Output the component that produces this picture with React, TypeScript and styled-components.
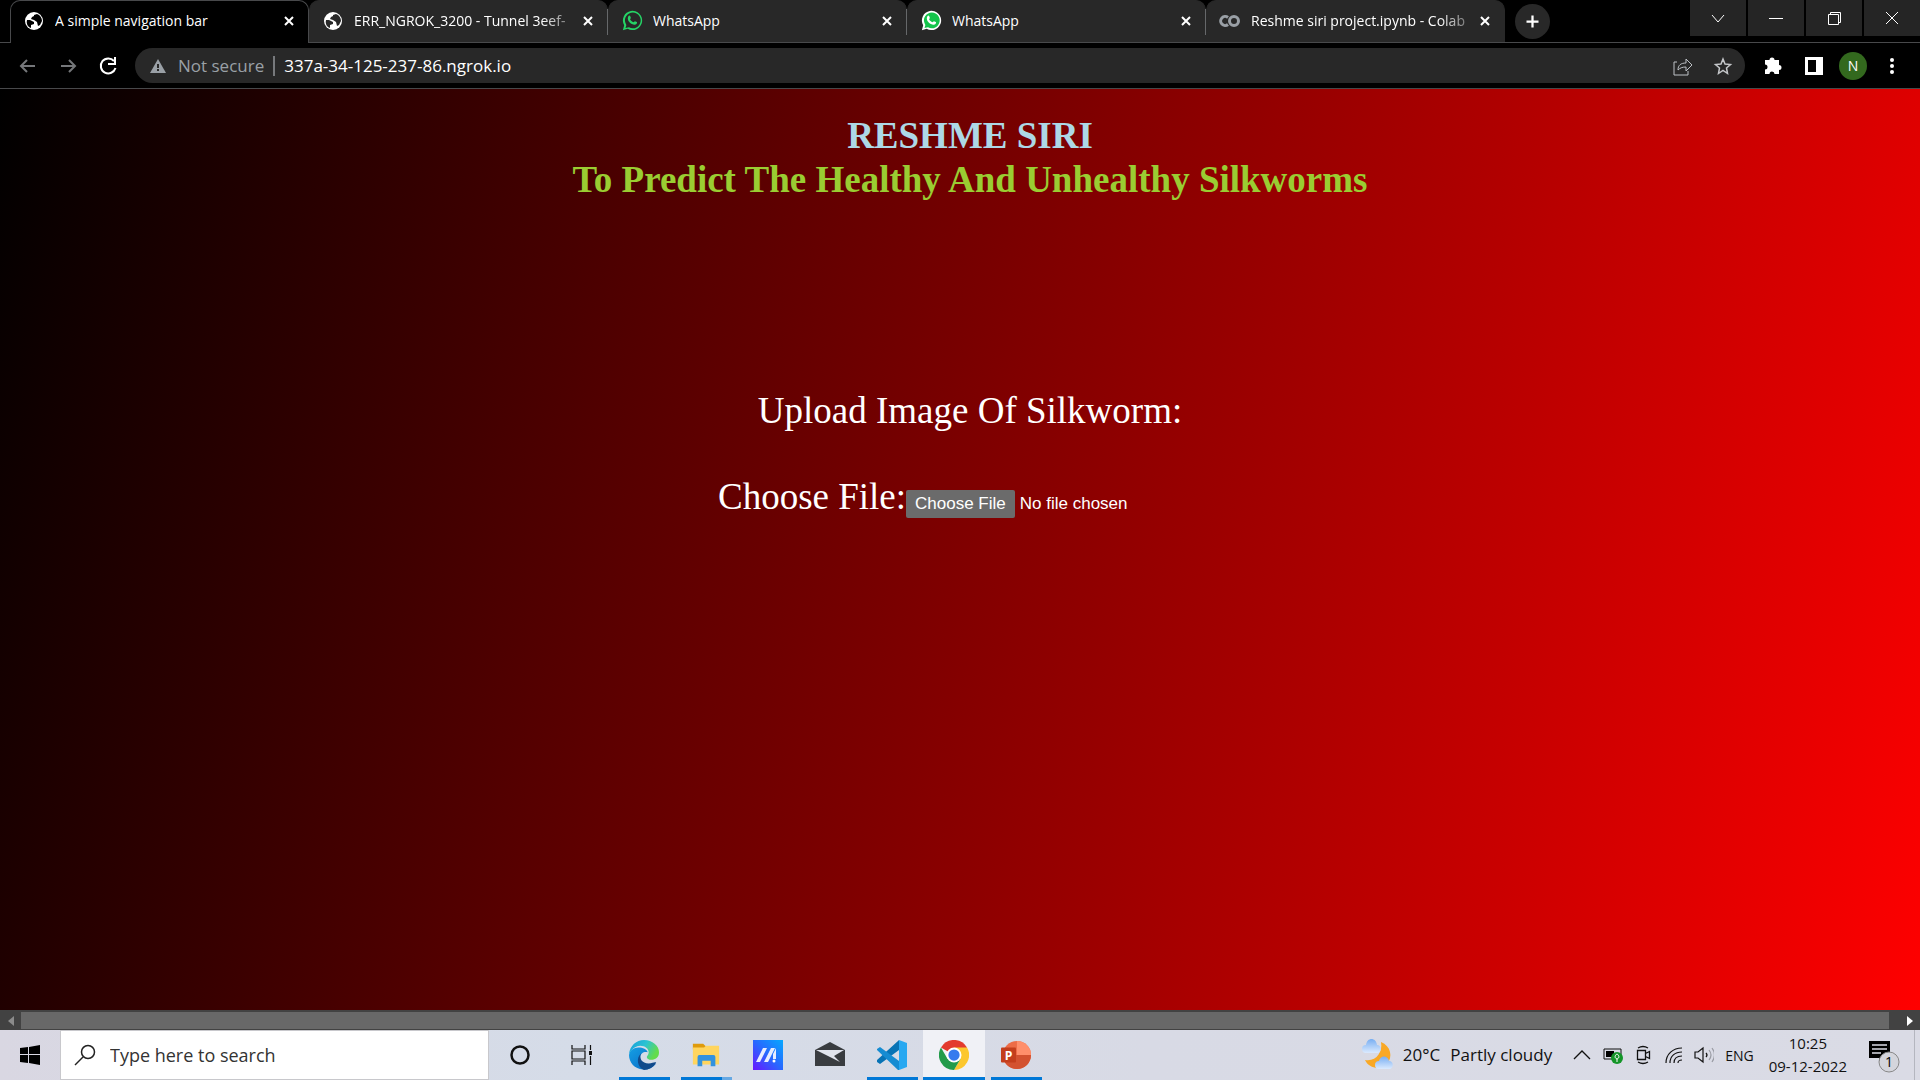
import React from "react";
import styled, { createGlobalStyle } from "styled-components";

const Global = createGlobalStyle`
  *, *::before, *::after { box-sizing: border-box; }
  body { margin: 0; background: #000; font-family: "Open Sans", "Noto Sans", sans-serif; }
  button { border: 0; padding: 0; background: none; color: inherit; font: inherit; }
`;

const Window = styled.div`
  display: flex;
  flex-direction: column;
  min-height: 100vh;
  overflow: hidden;
`;

const TabStrip = styled.header`
  display: flex;
  height: 43px;
  padding-left: 10px;
  border-bottom: 1px solid #48494b;
  color: #fff;
`;

const Tabs = styled.div`
  display: flex;
  flex: 0 1 1495px;
  min-width: 0;
`;

const Tab = styled.div<{ $active?: boolean; $divider?: boolean }>`
  position: relative;
  display: flex;
  align-items: center;
  flex: 1 1 0;
  min-width: 0;
  height: ${(p) => (p.$active ? 43 : 42)}px;
  padding: 0 13px 2px 12px;
  gap: 10px;
  border-radius: 10px 10px 0 0;
  border: 1px solid ${(p) => (p.$active ? "#48494b" : "#282828")};
  border-bottom: 0;
  background: ${(p) => (p.$active ? "#000" : "#282828")};

  ${(p) =>
    p.$divider &&
    `&::before { content: ""; position: absolute; left: -2px; top: 8px; width: 1px; height: 26px; background: #66686a; }`}
`;

const TabTitle = styled.span<{ $long?: boolean }>`
  flex: 1;
  min-width: 0;
  overflow: hidden;
  white-space: nowrap;
  font-size: 14px;
  line-height: 20px;
  ${(p) => p.$long && "mask-image: linear-gradient(to right, #000 86%, rgba(0, 0, 0, 0.3));"}
`;

const IconSlot = styled.span`
  display: grid;
  place-items: center;
  flex: none;
  width: 22px;
`;

const IconButton = styled.button<{ $size: number }>`
  display: grid;
  place-items: center;
  flex: none;
  width: ${(p) => p.$size}px;
  height: ${(p) => p.$size}px;
  svg { display: block; }
`;

const NewTab = styled(IconButton)`
  align-self: center;
  margin: 0 auto 0 10px;
  border-radius: 50%;
  background: #282828;
`;

const WindowControls = styled.div`
  display: flex;
  gap: 2px;
  height: 36px;
`;

const WindowButton = styled.button`
  display: grid;
  place-items: center;
  width: 56px;
  background: #252525;
`;

const Toolbar = styled.nav`
  display: flex;
  align-items: center;
  height: 46px;
  padding: 0 12px;
  border-bottom: 1px solid #48494b;
  color: #fff;
`;

const NavButtons = styled.div`
  display: flex;
  gap: 8px;
  margin-right: 11px;
`;

const AddressBar = styled.div`
  display: flex;
  align-items: center;
  flex: 1;
  height: 35px;
  padding: 0 6px 0 15px;
  border-radius: 18px;
  background: #282828;
`;

const Security = styled.span`
  padding: 0 9px 0 12px;
  border-right: 2px solid #77797c;
  color: #9aa0a6;
  font-size: 17px;
  line-height: 20px;
`;

const Address = styled.input`
  flex: 1;
  min-width: 0;
  padding: 0 0 0 9px;
  border: 0;
  outline: 0;
  background: none;
  color: #fff;
  font: 17px/24px "Open Sans", "Noto Sans", sans-serif;
`;

const ToolbarActions = styled.div`
  display: flex;
  align-items: center;
  gap: 9px;
  margin-left: 12px;
`;

const Avatar = styled.button`
  width: 28px;
  height: 28px;
  border-radius: 50%;
  background: #33691e;
  font-size: 14px;
`;

const Page = styled.main`
  flex: 1;
  padding: 25px 0 0 20px;
  background: linear-gradient(107deg, #000, #f00);
  font: 37px/44px "Liberation Serif", serif;
  text-align: center;
  color: #fff;
`;

const Heading = styled.h1<{ $color: string }>`
  margin: 0;
  font: bold 37px/44px "Liberation Serif", serif;
  color: ${(p) => p.$color};
`;

const UploadForm = styled.form`
  margin-top: 187px;
`;

const FormTitle = styled.p`
  margin: 0 0 42px;
`;

const FileRow = styled.div`
  display: flex;
  align-items: baseline;
  justify-content: center;
`;

const FileInput = styled.input`
  width: 316px;
  color: #fff;
  font: 17px/20px "Liberation Sans", Arial, sans-serif;

  &::file-selector-button {
    height: 28px;
    margin-right: 5px;
    padding: 1px 9px;
    border: 0;
    border-radius: 2px;
    background: #6b6b6b;
    color: #fff;
    font: inherit;
  }
`;

const ScrollBar = styled.div`
  display: flex;
  height: 20px;
  padding: 2px 0 1px;
  background: #424242;
`;

const ScrollThumb = styled.div`
  flex: 1;
  background: #686868;
`;

const ScrollButton = styled.button<{ $color: string }>`
  display: grid;
  place-items: center;
  width: 21px;
  color: ${(p) => p.$color};
`;

const ScrollEnd = styled.div`
  display: flex;
  justify-content: flex-end;
  width: 31px;
`;

const Taskbar = styled.footer`
  display: flex;
  height: 50px;
  background: linear-gradient(90deg, #d9d7e2, #d5dce8 30%, #d8dae5 60%, #dadbe5);
  color: #111;
`;

const StartButton = styled.button`
  display: grid;
  place-items: center;
  width: 60px;
`;

const SearchBox = styled.label`
  display: flex;
  align-items: center;
  width: 429px;
  border: 1px solid #c8c8cc;
  padding-left: 13px;
  gap: 14px;
  background: #fff;
`;

const SearchInput = styled.input`
  flex: 1;
  min-width: 0;
  padding: 0;
  border: 0;
  outline: 0;
  background: none;
  font: 18px/26px "Open Sans", "Noto Sans", sans-serif;
  &::placeholder { color: #333; opacity: 1; }
`;

const Apps = styled.div`
  display: flex;
  flex: 1;
`;

const AppButton = styled.button<{ $state?: "open" | "stacked" | "focused" }>`
  display: flex;
  flex-direction: column;
  align-items: center;
  width: 62px;
  padding-top: 10px;
  background: ${(p) => (p.$state === "focused" ? "#f0f1f6" : "none")};

  &::after {
    content: "";
    width: ${(p) => (p.$state === "focused" ? "100%" : "51px")};
    height: 3px;
    margin-top: auto;
    background: ${(p) =>
      !p.$state
        ? "none"
        : p.$state === "stacked"
          ? "linear-gradient(90deg, #0078d7 80%, #66a8e3 80%)"
          : "#0078d7"};
  }
`;

const Tray = styled.div`
  display: flex;
  align-items: center;
  padding-right: 5px;
`;

const Weather = styled.button`
  display: flex;
  align-items: center;
  gap: 10px;
  margin-right: 20px;
  font-size: 17px;
  line-height: 24px;
  white-space: nowrap;
`;

const TrayIcons = styled.div`
  display: flex;
  align-items: center;
  gap: 10px;
`;

const Language = styled.button`
  margin: 0 15px 0 11px;
  font-size: 14px;
`;

const Clock = styled.time`
  margin-right: 20px;
  font-size: 15px;
  line-height: 23px;
  text-align: center;
  white-space: nowrap;
`;

const Notifications = styled.button`
  padding: 5px 13px 0 0;
  border-right: 1px solid #b4b6bf;
  height: 50px;
`;

const Globe = ({ hole }: { hole: string }) => (
  <svg width="20" height="20" viewBox="0 0 20 20" aria-hidden="true">
    <circle cx="10" cy="10" r="9" fill="#fff" />
    <path d="M3 9h3l4 2v2l-3 1v3C4 16 2 13 3 9zm7-5 3-1c3 1 5 4 5 7l-2 4-2 1-1-4-3-2-3-1 1-2 2-1z" fill={hole} />
  </svg>
);

const WhatsApp = ({ filled }: { filled?: boolean }) => (
  <svg width="21" height="21" viewBox="0 0 24 24" aria-hidden="true">
    <path d="M1 23 2.500 17.500A11 11 0 1 1 6.500 21.500z" fill={filled ? "#fff" : "#25d366"} />
    <path d="M4 20.500 5 17a9 9 0 1 1 3 2.700z" fill={filled ? "#14c44b" : "#282828"} />
    <path d="M7.300 7c.7-1 1.700-.8 2-.1l.8 2c.1.600-.5 1.100-.9 1.600.8 1.600 2.200 2.800 4 3.600.5-.4 1-1.300 1.600-1.300l2.100 1c.6.300.3 1.500-.3 2.100-1.400 1.400-3.400 1-5.300 0-3-1.600-6-5-4-8.900z" fill={filled ? "#fff" : "#25d366"} />
  </svg>
);

const Colab = () => (
  <svg width="22" height="14" viewBox="0 0 22 14" fill="none" stroke="#9aa0a6" strokeWidth="3" aria-hidden="true">
    <path d="M9 3.500A4.500 4.500 0 1 0 9 10.500" />
    <circle cx="15" cy="7" r="4.500" />
  </svg>
);

const Cross = () => (
  <svg width="12" height="12" viewBox="0 0 12 12" stroke="#fff" strokeWidth="2" aria-hidden="true">
    <path d="m2 2 8 8m0-8-8 8" />
  </svg>
);

type LineProps = { d: string; size?: number; width?: number; color?: string; fill?: string };
const Line = ({ d, size = 20, width = 2, color = "currentColor", fill = "none" }: LineProps) => (
  <svg width={size} height={size} viewBox="0 0 20 20" fill={fill} stroke={color} strokeWidth={width} aria-hidden="true">
    <path d={d} />
  </svg>
);

const EdgeIcon = () => (
  <svg width="30" height="30" viewBox="0 0 32 32" aria-hidden="true">
    <defs>
      <linearGradient id="edgeTop" x2="1" y2=".4"><stop stopColor="#159bdc" /><stop offset=".55" stopColor="#2bc3d2" /><stop offset="1" stopColor="#63dc4b" /></linearGradient>
      <linearGradient id="edgeLeft" y2="1"><stop stopColor="#159fe4" /><stop offset="1" stopColor="#0868c4" /></linearGradient>
    </defs>
    <path d="M0 15C1 6 8 0 16 0c9 0 16 6 16 13 0 6-4 8-8 8-3 0-5-1-5-3 0-1 2-2 2-5 0-4-4-7-9-7-4 0-9 3-12 9z" fill="url(#edgeTop)" />
    <path d="M0 16c1-5 5-8 10-8 5 0 9 2 10 5-4-1-8 1-8 6 0 6 7 10 17 6-4 5-9 7-14 6.500C6 31 0 24 0 16z" fill="url(#edgeLeft)" />
    <path d="M13 14c-3 5 1 11 8 11 4 0 6-2 8-1-3 5-8 8-13 8-7-3-9-13-3-18z" fill="#114a8b" />
  </svg>
);

const FolderIcon = () => (
  <svg width="30" height="30" viewBox="0 0 32 32" aria-hidden="true">
    <path d="M2 4h11l3 3-3 3H2z" fill="#df9b0c" /><path d="M2 8h12l2-2h14v20H2z" fill="#ffd55e" />
    <path d="M7 28V18q0-2 2-2h15q2 0 2 2v10h-5v-6h-9v6z" fill="#3392de" />
  </svg>
);

const MyAsusIcon = () => (
  <svg width="30" height="30" viewBox="0 0 30 30" aria-hidden="true">
    <defs><linearGradient id="asus" x1="0" y1="1" x2="1" y2="0"><stop stopColor="#6a16ff" /><stop offset=".5" stopColor="#2868ff" /><stop offset="1" stopColor="#06a9ff" /></linearGradient></defs>
    <path fill="url(#asus)" d="M0 0h30v30H0z" /><path d="M3 22h4l7-14h-4zm8 0h4L22 8h-4zM20 14l3-6v11h-3z" fill="#e8edff" /><circle cx="21" cy="21" r="1.500" fill="#fff" />
  </svg>
);

const MailIcon = () => (
  <svg width="30" height="30" viewBox="0 0 30 30" aria-hidden="true">
    <path d="M0 10 15 2l15 8v16H0z" fill="#393c40" /><path d="M1 10h28l-10 6 6 6-12-6z" fill="#e1e4ed" />
  </svg>
);

const CodeIcon = () => (
  <svg width="30" height="30" viewBox="0 0 30 30" aria-hidden="true">
    <path d="M22 0v10L3 24l-3-2v-2L21 1z" fill="#0873b5" /><path d="m3 7 19 14v9h-1L0 10V9z" fill="#168cd2" /><path d="m22 0 8 3v24l-8 3z" fill="#28a8f1" />
  </svg>
);

const ChromeIcon = () => (
  <svg width="30" height="30" viewBox="0 0 32 32" aria-hidden="true">
    <path d="M2.100 8A16 16 0 0 1 29.900 8L16 16z" fill="#e33b2e" />
    <path d="M16 8h13.900A16 16 0 0 1 16 32l7-12z" fill="#fcc72e" />
    <path d="M16 32A16 16 0 0 1 2.100 8L9 20l14 0z" fill="#229b4a" />
    <circle cx="16" cy="16" r="8" fill="#fff" /><circle cx="16" cy="16" r="6" fill="#377bee" />
  </svg>
);

const PowerPointIcon = () => (
  <svg width="30" height="30" viewBox="0 0 32 32" aria-hidden="true">
    <circle cx="17" cy="16" r="15" fill="#ed6c47" /><path d="M17 1a15 15 0 0 1 15 15H17z" fill="#ff8f6b" /><path d="M2 16h30a15 15 0 0 1-30 0z" fill="#d35230" />
    <rect y="8" width="16" height="16" rx="1" fill="#c43e1c" /><text x="8" y="21" fill="#fff" textAnchor="middle" fontFamily="Open Sans" fontWeight="700" fontSize="13">P</text>
  </svg>
);

const WeatherIcon = () => (
  <svg width="32" height="34" viewBox="0 0 32 34" aria-hidden="true">
    <defs><linearGradient id="cloud" x2="0" y2="1"><stop stopColor="#78aef2" /><stop offset="1" stopColor="#dbeafe" /></linearGradient></defs>
    <path d="M20 4c10 4 12 15 6 22-6 6-18 5-22-4 11 2 18-8 16-18z" fill="#f9a825" />
    <path d="M5 15a4 4 0 0 1 0-8c1-8 10-8 11 0 5 0 5 8 0 8z" fill="url(#cloud)" /><path d="M18 31a4 4 0 0 1 0-8c1-6 9-6 10 0 5 0 5 8 0 8z" fill="url(#cloud)" />
  </svg>
);

const tabs = [
  { title: "A simple navigation bar", icon: <Globe hole="#000" /> },
  { title: "ERR_NGROK_3200 - Tunnel 3eef-", icon: <Globe hole="#282828" />, long: true },
  { title: "WhatsApp", icon: <WhatsApp /> },
  { title: "WhatsApp", icon: <WhatsApp filled /> },
  { title: "Reshme siri project.ipynb - Colab", icon: <Colab />, long: true },
];

export default function App() {
  return (
    <Window>
      <Global />
      <TabStrip>
        <Tabs>
          {tabs.map((tab, i) => (
            <Tab key={i} $active={i === 0} $divider={i > 1}>
              <IconSlot>{tab.icon}</IconSlot>
              <TabTitle $long={tab.long}>{tab.title}</TabTitle>
              <IconButton $size={12} aria-label="Close tab"><Cross /></IconButton>
            </Tab>
          ))}
        </Tabs>
        <NewTab $size={35} aria-label="New tab"><Line d="M10 2v16M2 10h16" size={15} width={3} /></NewTab>
        <WindowControls>
          <WindowButton aria-label="Search tabs"><Line d="m4 7 6 7 6-7" width={1} /></WindowButton>
          <WindowButton aria-label="Minimize"><Line d="M3 10.500h14" width={1} /></WindowButton>
          <WindowButton aria-label="Restore"><Line d="M4.500 6.500h10v10h-10zM6.500 6V4.500h10v10H15" width={1} /></WindowButton>
          <WindowButton aria-label="Close"><Line d="m4 4 12 12m0-12L4 16" width={1} /></WindowButton>
        </WindowControls>
      </TabStrip>
      <Toolbar>
        <NavButtons>
          <IconButton $size={32} aria-label="Back"><Line d="M17 10H3m6-6-6 6 6 6" color="#75777a" /></IconButton>
          <IconButton $size={32} aria-label="Forward"><Line d="M3 10h14m-6-6 6 6-6 6" color="#75777a" /></IconButton>
          <IconButton $size={32} aria-label="Reload"><Line d="M16 5a7.500 7.500 0 1 0 1.500 7M17 1v7h-7" /></IconButton>
        </NavButtons>
        <AddressBar>
          <svg width="16" height="16" viewBox="0 0 16 16" aria-hidden="true"><path d="m8 1 8 14H0z" fill="#9aa0a6" /><path d="M8 6v4m0 1v2" stroke="#282828" strokeWidth="2" /></svg>
          <Security>Not secure</Security>
          <Address aria-label="Address" defaultValue="337a-34-125-237-86.ngrok.io" />
          <IconButton $size={48} aria-label="Share"><Line d="M4 6H1v13h14v-4M5 14c0-5 3-7 8-7V3l6 6-6 6v-4c-4 0-6 1-8 3z" color="#bdc1c6" width={1} /></IconButton>
          <IconButton $size={32} aria-label="Bookmark"><Line d="m10 3 2 5 5.500.5-4 3.500 1 5.500-4.500-3-4.500 3 1-5.500-4-3.500L8 8z" color="#c4c6c9" width={1.5} /></IconButton>
        </AddressBar>
        <ToolbarActions>
          <IconButton $size={32} aria-label="Extensions"><Line d="M2 4h4.500a2.500 2.500 0 1 1 5 0H16v5a2.500 2.500 0 1 1 0 5v4h-4.500a2.500 2.500 0 0 0-5 0H2v-4.500a2.500 2.500 0 0 0 0-5z" fill="#fff" width={0} /></IconButton>
          <IconButton $size={32} aria-label="Side panel"><svg width="18" height="18" viewBox="0 0 18 18"><path fill="#fff" d="M0 0h18v18H0z" /><path d="M3 3h8v12H3z" /></svg></IconButton>
          <Avatar aria-label="Profile">N</Avatar>
          <IconButton $size={32} aria-label="Menu"><svg width="6" height="18" viewBox="0 0 6 18" fill="#fff"><circle cx="3" cy="3" r="2" /><circle cx="3" cy="9" r="2" /><circle cx="3" cy="15" r="2" /></svg></IconButton>
        </ToolbarActions>
      </Toolbar>
      <Page>
        <Heading $color="lightblue">RESHME SIRI</Heading>
        <Heading $color="yellowgreen" as="h2">To Predict The Healthy And Unhealthy Silkworms</Heading>
        <UploadForm>
          <FormTitle>Upload Image Of Silkworm:</FormTitle>
          <FileRow>
            <label htmlFor="image">Choose File:</label>
            <FileInput id="image" type="file" />
          </FileRow>
        </UploadForm>
      </Page>
      <ScrollBar>
        <ScrollButton $color="#8b8b8b" aria-label="Scroll left"><svg width="6" height="10"><path d="M6 0v10L0 5z" fill="currentColor" /></svg></ScrollButton>
        <ScrollThumb />
        <ScrollEnd><ScrollButton $color="#fff" aria-label="Scroll right"><svg width="6" height="10"><path d="M0 0v10l6-5z" fill="currentColor" /></svg></ScrollButton></ScrollEnd>
      </ScrollBar>
      <Taskbar>
        <StartButton aria-label="Start"><svg width="20" height="20" viewBox="0 0 20 20"><path d="m0 3 8-1v7H0zm9-1 11-2v9H9zM0 10h8v8l-8-1zm9 0h11v10L9 18z" /></svg></StartButton>
        <SearchBox>
          <svg width="22" height="22" viewBox="0 0 22 22" fill="none" stroke="#222" strokeWidth="1.500" aria-hidden="true"><circle cx="14" cy="8" r="6.500" /><path d="m9 13-8 8" /></svg>
          <SearchInput aria-label="Search" placeholder="Type here to search" />
        </SearchBox>
        <Apps>
          <AppButton aria-label="Cortana"><svg width="20" height="30" viewBox="0 0 20 30"><circle cx="10" cy="15" r="8.500" fill="none" stroke="#111" strokeWidth="2.500" /></svg></AppButton>
          <AppButton aria-label="Task view"><svg width="22" height="30" viewBox="0 0 22 30" fill="none" stroke="#111" strokeWidth="1.200"><path d="M1 5v4h13V5M1 25v-4h13v4M1 11h13v8H1zM19.500 5v5m0 6v9" /><path d="M19.500 11v4" strokeWidth="3" /></svg></AppButton>
          <AppButton $state="open" aria-label="Edge"><EdgeIcon /></AppButton>
          <AppButton $state="stacked" aria-label="File Explorer"><FolderIcon /></AppButton>
          <AppButton aria-label="MyASUS"><MyAsusIcon /></AppButton>
          <AppButton aria-label="Mail"><MailIcon /></AppButton>
          <AppButton $state="open" aria-label="Visual Studio Code"><CodeIcon /></AppButton>
          <AppButton $state="focused" aria-label="Chrome"><ChromeIcon /></AppButton>
          <AppButton $state="open" aria-label="PowerPoint"><PowerPointIcon /></AppButton>
        </Apps>
        <Tray>
          <Weather><WeatherIcon /><span>20°C</span><span>Partly cloudy</span></Weather>
          <TrayIcons>
            <Line d="m2 14 8-8 8 8" width={1.3} />
            <svg width="22" height="20" viewBox="0 0 22 20"><path d="M2 4h17v10H2z" fill="none" stroke="#111" /><path d="M4 6h8v6H4z" /><circle cx="15" cy="13" r="6" fill="#149629" /><path d="M15 17v-3m0 0c-3-1-2-4 0-5 2 1 3 4 0 5z" fill="none" stroke="#fff" /></svg>
            <Line d="M3.500 5.500h8v9h-8zm8 3 4-2v7l-4-2M4 3q5-3 10 0M4 17q5 3 10 0" width={1.3} />
            <Line d="M2 18C2 9 9 3 18 3M6 18c0-7 5-11 12-11M10 18c0-5 3-7 8-7M14 18c0-2 1-3 4-3" width={1.2} />
            <svg width="20" height="20" viewBox="0 0 20 20" fill="none" stroke="#111" strokeWidth="1.200"><path d="M1 7h3l5-4v14l-5-4H1zM12 8q2 2 0 4" /><path d="M15 5q4 5 0 10M18 3q5 7 0 14" stroke="#999ba3" /></svg>
          </TrayIcons>
          <Language>ENG</Language>
          <Clock>10:25<br />09-12-2022</Clock>
          <Notifications aria-label="1 notification"><svg width="34" height="38" viewBox="0 0 34 38"><path d="M2 5h21v17h-8l-3 4v-4H2z" /><path d="M5 9h15M5 13h15M5 17h9" stroke="#dadbe5" strokeWidth="1.500" /><circle cx="22" cy="26" r="10" fill="#d4d5dc" stroke="#888" /><text x="22" y="31" textAnchor="middle" fontFamily="Open Sans" fontSize="14">1</text></svg></Notifications>
        </Tray>
      </Taskbar>
    </Window>
  );
}
